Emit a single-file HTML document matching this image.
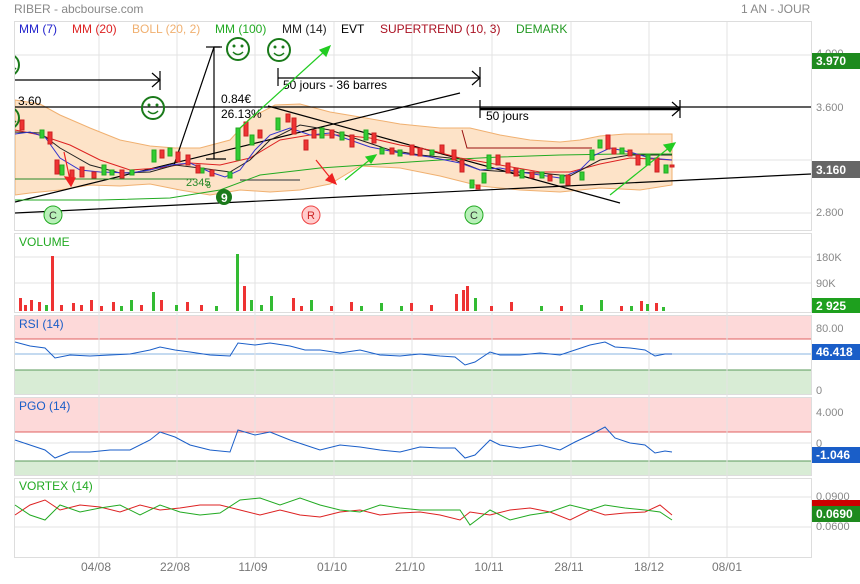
<!DOCTYPE html>
<html><head><meta charset="utf-8"><style>
body{margin:0;background:#fff;width:860px;height:579px;overflow:hidden;font-family:"Liberation Sans",sans-serif}
svg text{font-family:"Liberation Sans",sans-serif}
</style></head><body>
<svg width="860" height="579" viewBox="0 0 860 579" xmlns="http://www.w3.org/2000/svg">
<defs><clipPath id="m"><rect x="15" y="22" width="796" height="208"/></clipPath></defs>
<rect width="860" height="579" fill="#fff"/>
<text x="14" y="13" font-size="12" fill="#888">RIBER - abcbourse.com</text>
<text x="741" y="13" font-size="12" fill="#888">1 AN - JOUR</text>
<g fill="none" stroke="#ddd">
<rect x="14.5" y="21.5" width="797" height="209"/>
<rect x="14.5" y="233.5" width="797" height="79"/>
<rect x="14.5" y="315.5" width="797" height="79"/>
<rect x="14.5" y="397.5" width="797" height="78"/>
<rect x="14.5" y="478.5" width="797" height="79"/>
</g>
<rect x="15" y="316" width="796" height="23" fill="#fdd9d9"/>
<line x1="15" y1="339" x2="811" y2="339" stroke="#e06060"/>
<rect x="15" y="370" width="796" height="24" fill="#d8ecd5"/>
<line x1="15" y1="370" x2="811" y2="370" stroke="#5a9a5a"/>
<line x1="15" y1="354" x2="811" y2="354" stroke="#8ab4e0"/>
<rect x="15" y="398" width="796" height="34" fill="#fdd9d9"/>
<line x1="15" y1="432" x2="811" y2="432" stroke="#e06060"/>
<rect x="15" y="461" width="796" height="14" fill="#d8ecd5"/>
<line x1="15" y1="461" x2="811" y2="461" stroke="#5a9a5a"/>
<g stroke="#e3e3e3">
<line x1="99" y1="22" x2="99" y2="557"/><line x1="177" y1="22" x2="177" y2="557"/><line x1="255" y1="22" x2="255" y2="557"/><line x1="334" y1="22" x2="334" y2="557"/><line x1="412" y1="22" x2="412" y2="557"/><line x1="492" y1="22" x2="492" y2="557"/><line x1="571" y1="22" x2="571" y2="557"/><line x1="649" y1="22" x2="649" y2="557"/><line x1="727" y1="22" x2="727" y2="557"/>
<line x1="15" y1="55" x2="811" y2="55"/><line x1="15" y1="160" x2="811" y2="160"/><line x1="15" y1="213" x2="811" y2="213"/>
<line x1="15" y1="257" x2="811" y2="257"/><line x1="15" y1="283" x2="811" y2="283"/>
<line x1="15" y1="443" x2="811" y2="443"/>
<line x1="15" y1="497" x2="811" y2="497"/><line x1="15" y1="527" x2="811" y2="527"/>
</g>
<g font-size="12">
<text x="19" y="33" fill="#2222cc">MM (7)</text>
<text x="72" y="33" fill="#dd2222">MM (20)</text>
<text x="132" y="33" fill="#f0b070">BOLL (20, 2)</text>
<text x="215" y="33" fill="#22aa22">MM (100)</text>
<text x="282" y="33" fill="#222">MM (14)</text>
<text x="341" y="33" fill="#000">EVT</text>
<text x="380" y="33" fill="#aa1122">SUPERTREND (10, 3)</text>
<text x="516" y="33" fill="#229922">DEMARK</text>
</g>
<g clip-path="url(#m)">
<path d="M15,100 L40,104 L60,115 L90,128 L120,140 L150,146 L175,148 L200,148 L230,140 L250,118 L275,105 L300,104 L330,112 L360,117 L400,124 L440,128 L470,128 L500,135 L530,140 L560,142 L580,140 L600,136 L625,134 L672,134 L672,185 L640,190 L600,188 L580,190 L560,192 L520,190 L480,186 L440,176 L400,168 L360,166 L330,184 L300,190 L270,192 L240,190 L210,195 L180,190 L150,184 L120,186 L90,185 L60,190 L30,193 L15,195 Z" fill="#fde3c8" stroke="#f0b070" stroke-width="1"/>
<g stroke="#000" fill="none" stroke-width="1.2">
<line x1="15" y1="107" x2="811" y2="107" stroke-width="1.3"/>
<line x1="480" y1="109" x2="680" y2="109" stroke-width="2.5"/>
<polyline points="672,102 680,109 672,116"/><line x1="680" y1="100" x2="680" y2="118"/><line x1="480" y1="100" x2="480" y2="118"/>
<line x1="15" y1="80" x2="160" y2="80"/><polyline points="152,73 160,80 152,87"/><line x1="160" y1="71" x2="160" y2="90"/>
<line x1="278" y1="78" x2="480" y2="78"/><polyline points="472,71 480,78 472,85"/><line x1="480" y1="67" x2="480" y2="87"/><line x1="278" y1="68" x2="278" y2="86"/>
<line x1="15" y1="213" x2="811" y2="174"/>
<line x1="15" y1="202" x2="460" y2="93"/>
<line x1="268" y1="106" x2="620" y2="203"/>
<polyline points="174,165 214,47 220,47"/>
<line x1="214" y1="47" x2="214" y2="159"/><line x1="206" y1="47" x2="222" y2="47"/><line x1="206" y1="159" x2="226" y2="159"/>
<line x1="240" y1="180" x2="300" y2="180" stroke="#555"/>
</g>
<g font-size="12" fill="#000">
<text x="18" y="105">3.60</text>
<text x="283" y="89">50 jours - 36 barres</text>
<text x="486" y="120">50 jours</text>
<text x="221" y="103">0.84€</text>
<text x="221" y="118">26.13%</text>
</g>
<polyline fill="none" stroke="#22aa22" stroke-width="1" points="15,200 100,200 170,198 220,190 260,175 320,168 380,164 440,160 500,157 560,155 620,154 672,154"/>
<polyline fill="none" stroke="#dd2222" stroke-width="1" points="15,130 40,135 70,145 100,160 130,170 160,168 190,163 220,165 250,158 280,140 310,135 340,135 370,138 400,145 430,150 460,158 500,165 540,172 570,172 600,164 630,158 672,160"/>
<polyline fill="none" stroke="#222" stroke-width="1" points="15,132 40,133 60,148 90,165 120,173 150,172 175,165 200,168 230,172 250,160 270,140 300,125 330,130 360,140 390,150 420,155 450,158 480,170 510,172 540,173 570,176 600,160 630,155 672,155"/>
<polyline fill="none" stroke="#3333cc" stroke-width="1" points="15,134 30,132 45,137 60,158 80,170 100,172 130,173 150,170 170,165 190,163 210,172 225,177 240,170 255,150 270,135 290,128 310,135 330,133 350,140 370,147 400,153 430,157 460,163 480,170 500,168 520,172 540,175 560,178 580,170 595,155 610,148 630,152 650,158 672,160"/>
<polyline fill="none" stroke="#2a8a2a" points="15,179 195,179 M240,180 245,172 330,172 M490,160 600,158 M600,180 672,180"/>
<polyline fill="none" stroke="#991111" points="462,130 467,148 592,148"/>
<g stroke-width="1">
<g stroke="#2a2" fill="#3c3">
<rect x="40" y="130" width="4" height="8"/><rect x="60" y="165" width="4" height="10"/><rect x="102" y="165" width="4" height="10"/><rect x="152" y="150" width="4" height="12"/><rect x="168" y="148" width="4" height="8"/><rect x="236" y="128" width="4" height="32"/><rect x="250" y="135" width="4" height="10"/><rect x="276" y="118" width="4" height="12"/><rect x="320" y="128" width="4" height="10"/><rect x="340" y="132" width="4" height="8"/><rect x="364" y="130" width="4" height="10"/><rect x="380" y="148" width="4" height="6"/><rect x="398" y="150" width="4" height="6"/><rect x="470" y="180" width="4" height="8"/><rect x="482" y="173" width="4" height="10"/><rect x="487" y="155" width="4" height="14"/><rect x="520" y="170" width="4" height="8"/><rect x="560" y="175" width="4" height="8"/><rect x="580" y="172" width="4" height="8"/><rect x="590" y="150" width="4" height="10"/><rect x="598" y="140" width="4" height="8"/><rect x="620" y="148" width="4" height="6"/><rect x="646" y="155" width="4" height="10"/><rect x="664" y="165" width="4" height="8"/>
<rect x="110" y="170" width="4" height="5"/><rect x="130" y="170" width="4" height="5"/><rect x="200" y="168" width="4" height="5"/><rect x="228" y="172" width="4" height="6"/><rect x="430" y="150" width="4" height="5"/><rect x="540" y="172" width="4" height="6"/>
</g>
<g stroke="#c22" fill="#e33">
<rect x="20" y="120" width="4" height="10"/><rect x="48" y="132" width="4" height="12"/><rect x="55" y="160" width="4" height="14"/><rect x="70" y="170" width="4" height="8"/><rect x="80" y="167" width="4" height="10"/><rect x="92" y="172" width="4" height="6"/><rect x="120" y="170" width="4" height="8"/><rect x="160" y="150" width="4" height="8"/><rect x="176" y="152" width="4" height="10"/><rect x="186" y="155" width="4" height="10"/><rect x="196" y="165" width="4" height="8"/><rect x="210" y="170" width="4" height="6"/><rect x="244" y="122" width="4" height="14"/><rect x="258" y="130" width="4" height="8"/><rect x="286" y="114" width="4" height="8"/><rect x="292" y="118" width="4" height="16"/><rect x="304" y="140" width="4" height="10"/><rect x="312" y="130" width="4" height="8"/><rect x="330" y="130" width="4" height="8"/><rect x="350" y="135" width="4" height="12"/><rect x="372" y="133" width="4" height="10"/><rect x="390" y="148" width="4" height="6"/><rect x="410" y="145" width="4" height="10"/><rect x="418" y="148" width="4" height="8"/><rect x="440" y="145" width="4" height="8"/><rect x="452" y="150" width="4" height="10"/><rect x="460" y="160" width="4" height="12"/><rect x="476" y="185" width="4" height="4"/><rect x="496" y="155" width="4" height="10"/><rect x="506" y="163" width="4" height="10"/><rect x="514" y="168" width="4" height="8"/><rect x="530" y="172" width="4" height="6"/><rect x="548" y="175" width="4" height="6"/><rect x="566" y="175" width="4" height="10"/><rect x="606" y="135" width="4" height="14"/><rect x="612" y="148" width="4" height="6"/><rect x="628" y="150" width="4" height="6"/><rect x="636" y="155" width="4" height="10"/><rect x="655" y="158" width="4" height="14"/><rect x="670" y="165" width="4" height="2"/>
</g>
</g>
<g stroke="#22cc22" stroke-width="1.2" fill="#22cc22">
<line x1="240" y1="128" x2="326" y2="50"/><polygon points="330,46 320,50 326,56"/>
<line x1="345" y1="180" x2="372" y2="158"/><polygon points="376,155 366,157 371,163"/>
<line x1="610" y1="195" x2="670" y2="147"/><polygon points="675,143 664,145 670,152"/>
</g>
<g stroke="#e22" stroke-width="1.2" fill="#e22">
<line x1="64" y1="152" x2="70" y2="180"/><polygon points="71,186 65,177 75,178"/>
<line x1="316" y1="160" x2="332" y2="180"/><polygon points="336,184 326,180 332,174"/>
</g>
<g fill="none" stroke="#1a7a1a" stroke-width="2">
<circle cx="238" cy="49" r="11"/><circle cx="279" cy="50" r="11"/><circle cx="153" cy="108" r="11"/><circle cx="8" cy="65" r="11"/><circle cx="8" cy="118" r="11"/>
</g>
<g fill="#1a7a1a"><circle cx="234" cy="46" r="1.5"/><circle cx="242" cy="46" r="1.5"/><circle cx="275" cy="47" r="1.5"/><circle cx="283" cy="47" r="1.5"/><circle cx="149" cy="105" r="1.5"/><circle cx="157" cy="105" r="1.5"/><circle cx="12" cy="62" r="1.5"/><circle cx="12" cy="115" r="1.5"/></g>
<g fill="none" stroke="#1a7a1a" stroke-width="1.5"><path d="M233,52 Q238,57 243,52"/><path d="M274,53 Q279,58 284,53"/><path d="M148,111 Q153,116 158,111"/><path d="M8,69 Q12,72 16,68"/><path d="M8,122 Q12,125 16,121"/></g>
<circle cx="224" cy="197" r="8" fill="#1a7a1a"/><text x="221" y="202" font-size="12" font-weight="bold" fill="#fff">9</text>
<text x="186" y="186" font-size="11" fill="#2a8a2a">2345</text><text x="206" y="188" font-size="9" fill="#2a8a2a">6</text>
<g font-size="11" text-anchor="middle">
<circle cx="53" cy="215" r="9" fill="#b8f0b8" stroke="#2a2"/><text x="53" y="219" fill="#333">C</text>
<circle cx="474" cy="215" r="9" fill="#b8f0b8" stroke="#2a2"/><text x="474" y="219" fill="#333">C</text>
<circle cx="311" cy="215" r="9" fill="#fcc" stroke="#e44"/><text x="311" y="219" fill="#c22">R</text>
</g>
</g>
<text x="19" y="246" font-size="12" fill="#22aa22">VOLUME</text>
<g fill="#e33"><rect x="51" y="256" width="3" height="55"/><rect x="19" y="298" width="3" height="13"/><rect x="30" y="300" width="3" height="11"/><rect x="38" y="302" width="3" height="9"/><rect x="72" y="303" width="3" height="8"/><rect x="90" y="300" width="3" height="11"/><rect x="112" y="302" width="3" height="9"/><rect x="160" y="300" width="3" height="11"/><rect x="186" y="302" width="3" height="9"/><rect x="243" y="286" width="3" height="25"/><rect x="292" y="298" width="3" height="13"/><rect x="350" y="302" width="3" height="9"/><rect x="410" y="303" width="3" height="8"/><rect x="455" y="294" width="3" height="17"/><rect x="462" y="290" width="3" height="21"/><rect x="466" y="286" width="3" height="25"/><rect x="510" y="302" width="3" height="9"/><rect x="640" y="301" width="3" height="10"/><rect x="655" y="303" width="3" height="8"/></g>
<g fill="#3b3"><rect x="236" y="254" width="3" height="57"/><rect x="152" y="292" width="3" height="19"/><rect x="130" y="300" width="3" height="11"/><rect x="250" y="300" width="3" height="11"/><rect x="270" y="296" width="3" height="15"/><rect x="310" y="300" width="3" height="11"/><rect x="380" y="303" width="3" height="8"/><rect x="474" y="298" width="3" height="13"/><rect x="600" y="300" width="3" height="11"/><rect x="646" y="304" width="3" height="7"/></g>
<g fill="#e33"><rect x="24" y="305" width="3" height="6"/><rect x="60" y="305" width="3" height="6"/><rect x="80" y="305" width="3" height="6"/><rect x="100" y="306" width="3" height="5"/><rect x="140" y="305" width="3" height="6"/><rect x="200" y="305" width="3" height="6"/><rect x="300" y="306" width="3" height="5"/><rect x="330" y="306" width="3" height="5"/><rect x="430" y="305" width="3" height="6"/><rect x="490" y="306" width="3" height="5"/><rect x="560" y="306" width="3" height="5"/><rect x="620" y="306" width="3" height="5"/></g>
<g fill="#3b3"><rect x="45" y="305" width="3" height="6"/><rect x="120" y="306" width="3" height="5"/><rect x="175" y="305" width="3" height="6"/><rect x="215" y="306" width="3" height="5"/><rect x="260" y="305" width="3" height="6"/><rect x="360" y="306" width="3" height="5"/><rect x="400" y="306" width="3" height="5"/><rect x="540" y="306" width="3" height="5"/><rect x="580" y="305" width="3" height="6"/><rect x="630" y="306" width="3" height="5"/><rect x="662" y="307" width="3" height="4"/></g>
<text x="19" y="328" font-size="12" fill="#1a5ec8">RSI (14)</text>
<polyline fill="none" stroke="#1a5ec8" points="15,342 30,346 45,348 55,358 70,355 90,356 110,355 130,354 150,350 160,347 175,350 190,352 210,355 230,356 238,343 255,345 270,343 290,346 305,350 320,350 340,353 360,350 380,355 400,356 420,354 440,356 455,357 465,365 475,362 490,352 500,355 520,355 540,353 560,355 575,350 590,345 605,342 615,347 630,348 645,350 655,356 665,354 672,354"/>
<text x="19" y="410" font-size="12" fill="#1a5ec8">PGO (14)</text>
<polyline fill="none" stroke="#1a5ec8" points="15,440 30,445 45,450 55,458 70,452 90,452 110,450 130,450 150,440 160,432 175,437 190,445 210,450 230,452 238,430 255,435 270,432 290,440 305,445 320,450 340,445 360,447 380,450 400,452 420,447 440,448 455,448 465,458 475,455 490,440 500,445 520,448 540,445 560,450 575,442 590,435 605,427 615,438 630,443 645,445 655,453 665,451 672,452"/>
<text x="19" y="490" font-size="12" fill="#22aa22">VORTEX (14)</text>
<polyline fill="none" stroke="#d22" points="15,515 30,505 45,500 60,510 80,505 100,507 120,512 140,505 160,510 180,508 200,505 220,505 240,510 260,515 280,510 300,515 320,517 340,512 360,510 380,515 400,513 420,512 440,515 460,520 470,512 490,515 510,510 530,508 550,512 570,520 590,510 605,515 625,513 645,512 660,505 672,515"/>
<polyline fill="none" stroke="#2a2" points="15,505 30,515 45,520 60,505 80,512 100,508 120,505 140,515 160,505 180,512 200,515 220,513 240,500 260,498 280,505 300,498 320,505 340,510 360,512 380,505 400,508 420,510 440,510 460,510 470,525 490,510 510,520 530,515 550,512 570,505 590,510 605,505 625,508 645,510 660,512 672,520"/>
<g font-size="11" fill="#888">
<text x="816" y="57">4.000</text><text x="816" y="111">3.600</text><text x="816" y="216">2.800</text>
<text x="816" y="261">180K</text><text x="816" y="287">90K</text>
<text x="816" y="332">80.00</text><text x="816" y="394">0</text>
<text x="816" y="416">4.000</text><text x="816" y="447">0</text>
<text x="816" y="500">0.0900</text><text x="816" y="530">0.0600</text>
</g>
<g font-size="12" font-weight="bold" fill="#fff">
<rect x="812" y="53" width="48" height="16" fill="#1e8a1e"/><text x="816" y="65">3.970</text>
<rect x="812" y="161" width="48" height="17" fill="#666"/><text x="816" y="174">3.160</text>
<rect x="812" y="298" width="48" height="15" fill="#1ea01e"/><text x="816" y="310">2 925</text>
<rect x="812" y="344" width="48" height="16" fill="#1a5ec8"/><text x="816" y="356">46.418</text>
<rect x="812" y="447" width="48" height="16" fill="#1a5ec8"/><text x="816" y="459">-1.046</text>
<rect x="812" y="500" width="48" height="7" fill="#c00"/>
<rect x="812" y="506" width="48" height="16" fill="#1e8a1e"/><text x="816" y="518">0.0690</text>
</g>
<g font-size="12" fill="#777" text-anchor="middle">
<text x="96" y="571">04/08</text><text x="175" y="571">22/08</text><text x="253" y="571">11/09</text><text x="332" y="571">01/10</text><text x="410" y="571">21/10</text><text x="489" y="571">10/11</text><text x="569" y="571">28/11</text><text x="649" y="571">18/12</text><text x="727" y="571">08/01</text>
</g>
</svg>
</body></html>
